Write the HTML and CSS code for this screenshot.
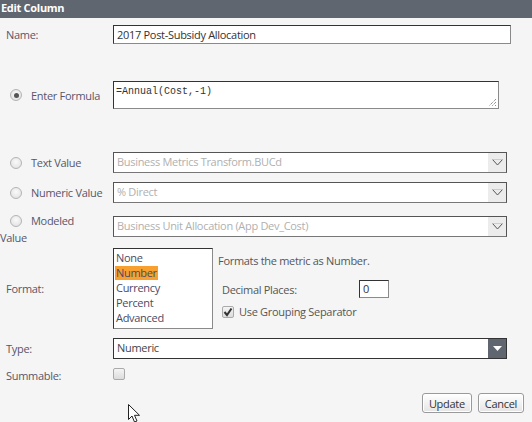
FILE: index.html
```html
<!DOCTYPE html>
<html>
<head>
<meta charset="utf-8">
<link rel="stylesheet" href="styles.css">
</head>
<body>
<div class="dialog">
  <div class="title">Edit Column</div>

  <div class="row row-name">
    <div class="label">Name:</div>
    <div class="field"><div class="textbox name-box">2017 Post-Subsidy Allocation</div></div>
  </div>

  <div class="row row-formula">
    <div class="label"><span class="radio checked"></span>Enter Formula</div>
    <div class="field"><div class="textarea">=Annual(Cost,-1)<svg class="grip" width="9" height="9" viewBox="0 0 9 9"><path d="M8 1 L1 8 M8 4 L4 8 M8 7 L7 8" stroke="#666" stroke-width="1" stroke-dasharray="1 1"/></svg></div></div>
  </div>

  <div class="row row-text">
    <div class="label"><span class="radio"></span>Text Value</div>
    <div class="field"><div class="select"><span class="select-text">Business Metrics Transform.BUCd</span><span class="select-arrow"><svg width="11" height="7" viewBox="0 0 11 7"><path d="M0.5 0.5 L5.5 6 L10.5 0.5" fill="none" stroke="#555" stroke-width="1"/><path d="M0.5 0.5 H10.5" stroke="#ccc"/></svg></span></div></div>
  </div>

  <div class="row row-numeric">
    <div class="label"><span class="radio"></span>Numeric Value</div>
    <div class="field"><div class="select"><span class="select-text">% Direct</span><span class="select-arrow"><svg width="11" height="7" viewBox="0 0 11 7"><path d="M0.5 0.5 L5.5 6 L10.5 0.5" fill="none" stroke="#555" stroke-width="1"/><path d="M0.5 0.5 H10.5" stroke="#ccc"/></svg></span></div></div>
  </div>

  <div class="row row-modeled">
    <div class="label label-wrap"><span class="radio"></span>Modeled<br>Value</div>
    <div class="field"><div class="select"><span class="select-text">Business Unit Allocation (App Dev_Cost)</span><span class="select-arrow"><svg width="11" height="7" viewBox="0 0 11 7"><path d="M0.5 0.5 L5.5 6 L10.5 0.5" fill="none" stroke="#555" stroke-width="1"/><path d="M0.5 0.5 H10.5" stroke="#ccc"/></svg></span></div></div>
  </div>

  <div class="row row-format">
    <div class="label">Format:</div>
    <div class="field format-field">
      <div class="listbox">
        <div class="option">None</div>
        <div class="option"><span class="selected">Number</span></div>
        <div class="option">Currency</div>
        <div class="option">Percent</div>
        <div class="option">Advanced</div>
      </div>
      <div class="format-options">
        <div class="format-desc">Formats the metric as Number.</div>
        <div class="decimals">
          <span>Decimal Places:</span>
          <div class="textbox small-box">0</div>
        </div>
        <div class="grouping">
          <span class="checkbox checked"><svg width="10" height="10" viewBox="0 0 10 10"><path d="M1.5 5 L4 8 L8.5 1.5" fill="none" stroke="#333" stroke-width="2"/></svg></span>
          <span>Use Grouping Separator</span>
        </div>
      </div>
    </div>
  </div>

  <div class="row row-type">
    <div class="label">Type:</div>
    <div class="field"><div class="select type-select"><span class="select-text dark">Numeric</span><span class="select-arrow dark-arrow"><svg width="9" height="5" viewBox="0 0 9 5"><path d="M0 0 H9 L4.5 5 Z" fill="#fff"/></svg></span></div></div>
  </div>

  <div class="row row-summable">
    <div class="label">Summable:</div>
    <div class="field"><span class="checkbox"></span></div>
  </div>

  <div class="actions">
    <button class="btn">Update</button>
    <button class="btn">Cancel</button>
  </div>

  <svg class="pointer" width="14" height="20" viewBox="0 0 14 20"><path d="M0.5 0.5 L0.5 15.5 L4 12 L6.5 18 L9 17 L6.5 11.3 L11.5 11.3 Z" fill="#fff" stroke="#222" stroke-width="1" stroke-linejoin="round"/></svg>
</div>
</body>
</html>
```

FILE: styles.css
```css
html, body {
  margin: 0;
  padding: 0;
}

body {
  background: #f5f5f5;
  font-family: "Open Sans", "Noto Sans", sans-serif;
  font-size: 11px;
  letter-spacing: -0.3px;
  color: #555;
}

.dialog {
  position: relative;
  width: 532px;
  height: 422px;
  overflow: hidden;
}

.title {
  height: 18px;
  line-height: 16px;
  background: #5f6670;
  color: #fff;
  font-weight: bold;
  font-size: 11px;
  padding-left: 1px;
}

.row {
  display: grid;
  grid-template-columns: 113px 1fr;
  align-items: center;
}

.label {
  padding-left: 6px;
  display: flex;
  align-items: center;
  white-space: nowrap;
  color: #58566a;
}

.row-name { margin-top: 7px; }
.row-formula { margin-top: 37px; }
.row-text { margin-top: 43px; }
.row-numeric { margin-top: 9px; }
.row-modeled { margin-top: 13px; align-items: start; }
.row-format { margin-top: 2px; }
.row-type { margin-top: 9px; }
.row-summable { margin-top: 9px; }

.label-wrap {
  display: block;
  padding-left: 0;
  margin-top: -4px;
  line-height: 17px;
}

.label-wrap .radio {
  margin-left: 10px;
  vertical-align: -2px;
}

.radio {
  display: inline-block;
  box-sizing: border-box;
  width: 12px;
  height: 12px;
  border-radius: 50%;
  border: 1px solid #b4b4b4;
  background: radial-gradient(circle at 50% 40%, #fafafa 0, #e6e6e6 70%, #d8d8d8 100%);
  margin-left: 4px;
  margin-right: 9px;
  position: relative;
}

.radio.checked::after {
  content: "";
  position: absolute;
  left: 2.5px;
  top: 2.5px;
  width: 5px;
  height: 5px;
  border-radius: 50%;
  background: #555;
}

.textbox {
  box-sizing: border-box;
  background: #fff;
  border: 1px solid;
  border-color: #333 #8a8a8a #8a8a8a #333;
  color: #333;
  padding: 0 3px;
  white-space: nowrap;
}

.name-box {
  width: 398px;
  height: 19px;
  line-height: 17px;
}

.textarea {
  position: relative;
  box-sizing: border-box;
  width: 386px;
  height: 28px;
  background: #fff;
  border: 1px solid;
  border-color: #333 #8a8a8a #8a8a8a #333;
  font-family: "Liberation Mono", "DejaVu Sans Mono", monospace;
  font-size: 10px;
  letter-spacing: 0;
  line-height: 13px;
  color: #333;
  padding: 3px 2px 0;
}

.grip {
  position: absolute;
  right: 1px;
  bottom: 1px;
}

.select {
  box-sizing: border-box;
  width: 394px;
  height: 21px;
  border: 1px solid #555;
  border-bottom-color: #777;
  background: #fff;
  display: flex;
  align-items: stretch;
}

.select-text {
  flex: 1;
  padding-left: 3px;
  line-height: 18px;
  color: #b0b0b0;
  white-space: nowrap;
  overflow: hidden;
}

.select-text.dark {
  color: #444;
}

.select-arrow {
  width: 18px;
  background: #ececec;
  display: flex;
  align-items: center;
  justify-content: center;
}

.type-select {
  border-color: #333;
}

.dark-arrow {
  background: #5f6670;
}

.format-field {
  display: flex;
  align-items: flex-start;
}

.listbox {
  box-sizing: border-box;
  width: 100px;
  height: 81px;
  background: #fff;
  border: 1px solid;
  border-color: #333 #8a8a8a #8a8a8a #333;
  padding: 1px 2px;
  color: #4a4a66;
}

.option {
  height: 15px;
  line-height: 15px;
}

.selected {
  display: inline-block;
  background: #f7a030;
  padding: 0 1px 0 1px;
  margin-left: -1px;
  line-height: 14px;
}

.format-options {
  margin-left: 5px;
  padding-top: 5px;
}

.format-desc {
  line-height: 16px;
}

.decimals {
  display: flex;
  align-items: center;
  margin-top: 11px;
  padding-left: 4px;
}

.decimals span {
  width: 137px;
}

.small-box {
  width: 30px;
  height: 18px;
  line-height: 16px;
}

.grouping {
  display: flex;
  align-items: center;
  margin-top: 6px;
  padding-left: 4px;
}

.checkbox {
  display: inline-flex;
  align-items: center;
  justify-content: center;
  box-sizing: border-box;
  width: 12px;
  height: 12px;
  border: 1px solid #aaa;
  border-radius: 2px;
  background: linear-gradient(#f4f4f4, #dcdcdc);
}

.grouping .checkbox {
  margin-right: 5px;
}

.actions {
  display: flex;
  justify-content: flex-end;
  gap: 6px;
  margin-top: 10px;
  padding-right: 8px;
}

.btn {
  box-sizing: border-box;
  height: 20px;
  padding: 0 6px;
  font-family: "Open Sans", "Noto Sans", sans-serif;
  font-size: 11px;
  letter-spacing: -0.3px;
  color: #333;
  border: 1px solid #9a9a9a;
  border-radius: 3px;
  background: linear-gradient(#ffffff, #e4e4e4);
  box-shadow: inset 0 0 0 1px #fff;
}

.pointer {
  position: absolute;
  left: 128px;
  top: 404px;
}
```
